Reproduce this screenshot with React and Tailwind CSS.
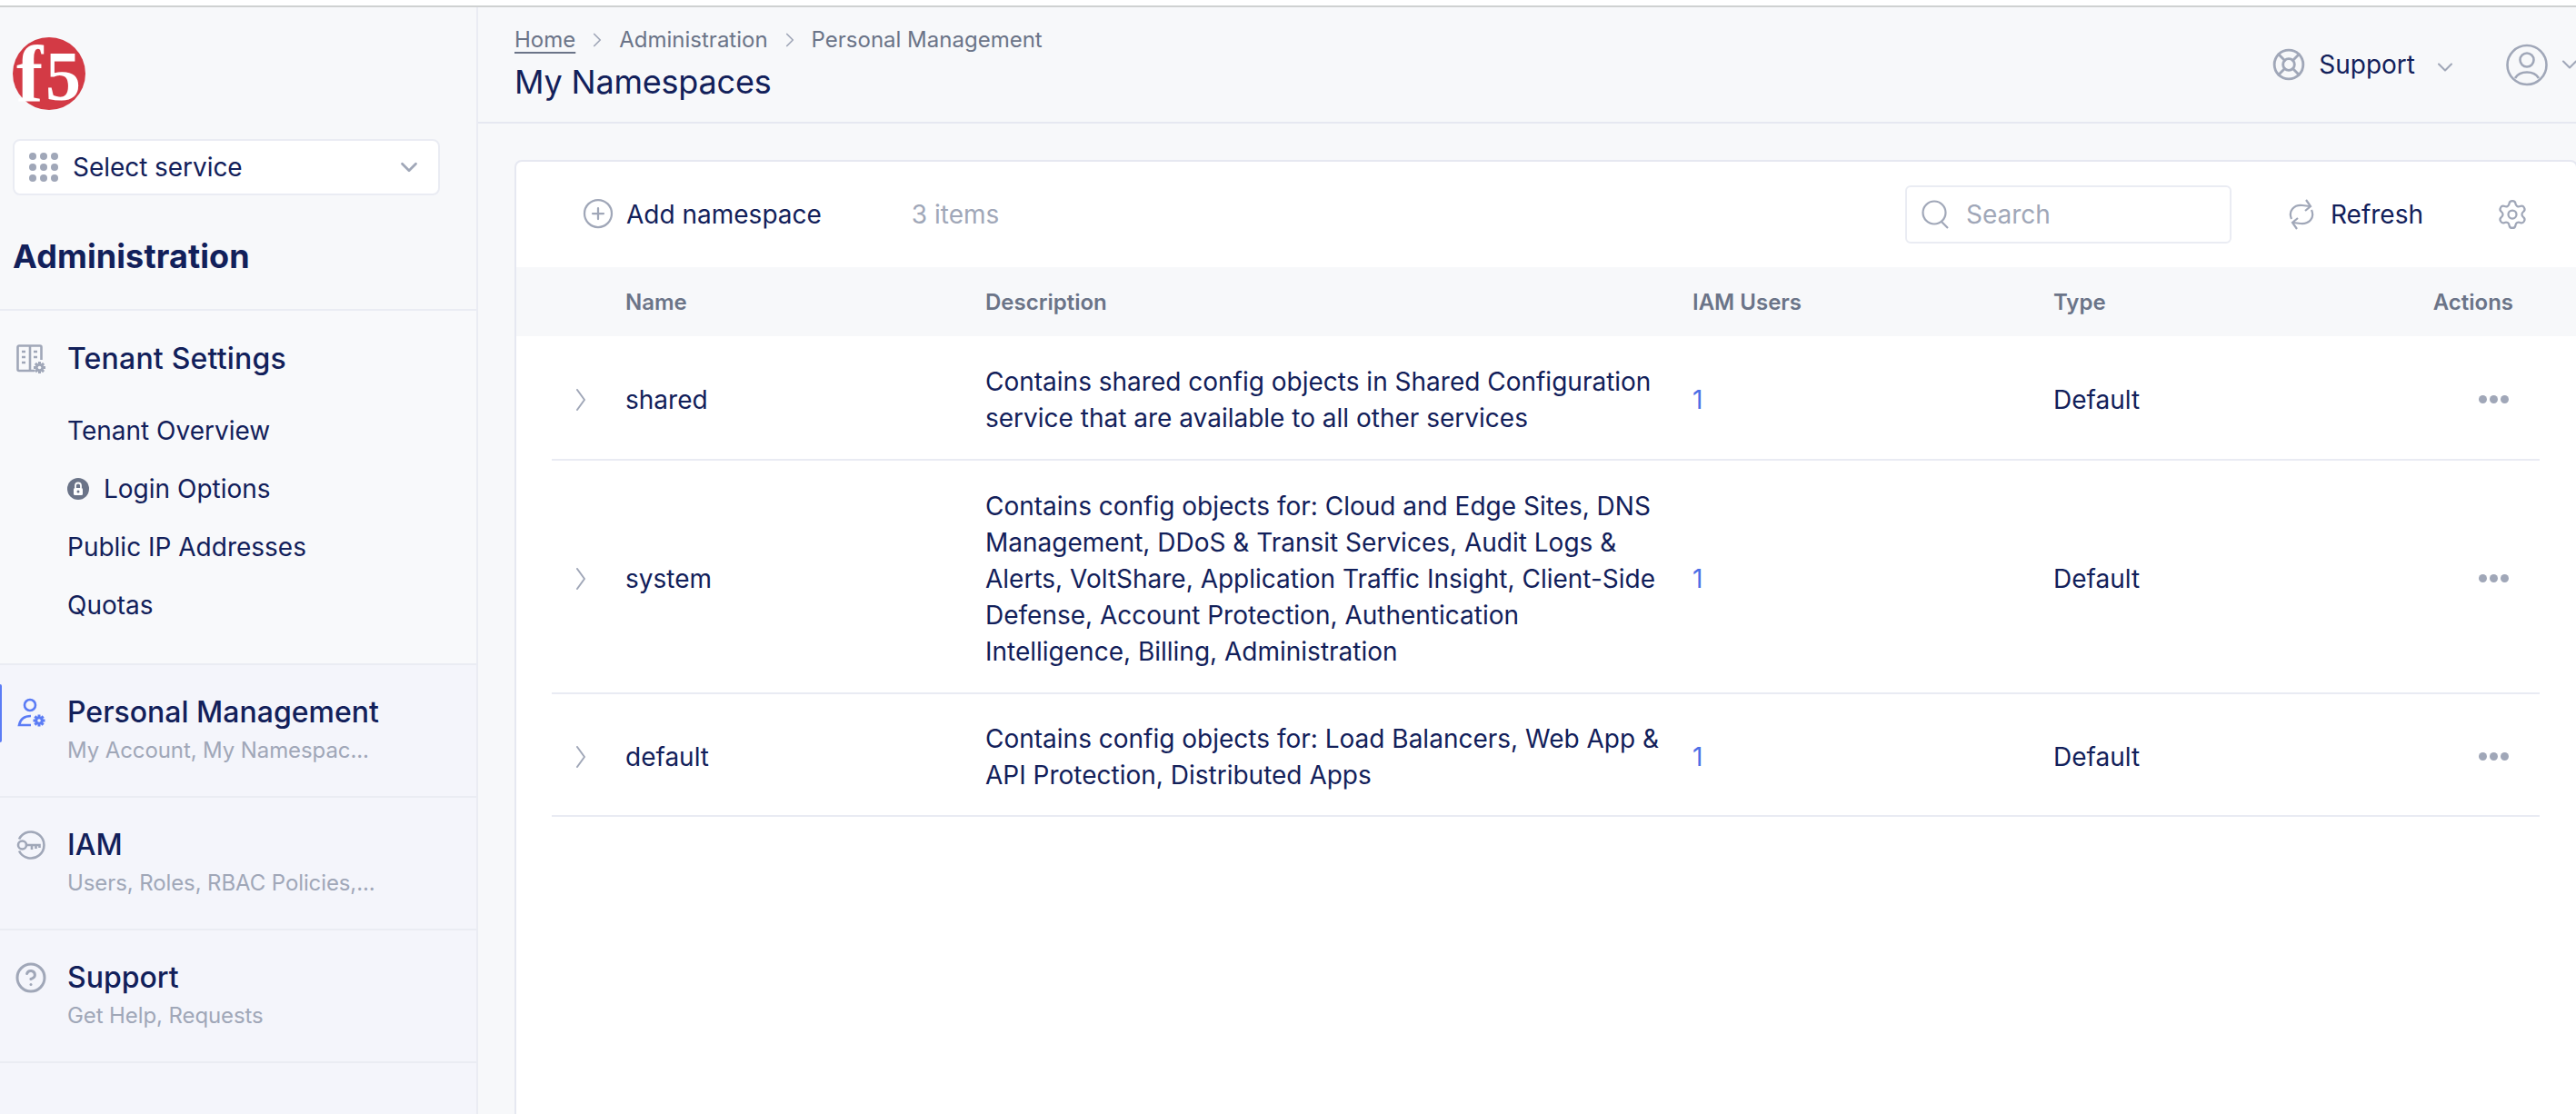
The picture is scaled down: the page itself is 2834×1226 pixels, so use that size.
import { ChevronDown, ChevronRight, CirclePlus, LifeBuoy, Settings, CircleHelp } from 'lucide-react'

const rows = [
  { name: 'shared', desc: 'Contains shared config objects in Shared Configuration service that are available to all other services', h: 'h-[137px]' },
  { name: 'system', desc: 'Contains config objects for: Cloud and Edge Sites, DNS Management, DDoS & Transit Services, Audit Logs & Alerts, VoltShare, Application Traffic Insight, Client-Side Defense, Account Protection, Authentication Intelligence, Billing, Administration', h: 'h-[257px]' },
  { name: 'default', desc: 'Contains config objects for: Load Balancers, Web App & API Protection, Distributed Apps', h: 'h-[135px]' },
]

function Logo() {
  return (
    <svg width="80" height="80" viewBox="0 0 80 80" className="overflow-visible">
      <circle cx="40" cy="40" r="40" fill="#d33a45" />
      <text x="4" y="70" fontFamily="Liberation Serif" fontWeight="700" fontSize="88" fill="#fff">f</text>
      <text x="36" y="69" fontFamily="Liberation Serif" fontWeight="700" fontSize="78" fill="#fff">5</text>
    </svg>
  )
}

function Dots() {
  return (
    <svg width="32" height="32" viewBox="0 0 32 32" fill="#a0a7b8">
      {[4, 16, 28].map(y => [4, 16, 28].map(x => <circle key={`${x}-${y}`} cx={x} cy={y} r="4" />))}
    </svg>
  )
}

// small solid cog that sits in the corner of the nav icons
function Cog({ x, y, color, bg }) {
  return (
    <g>
      {[0, 45, 90, 135].map(a => (
        <rect key={a} x={x - 1.5} y={y - 6.5} width="3" height="13" fill={color} transform={`rotate(${a} ${x} ${y})`} />
      ))}
      <circle cx={x} cy={y} r="4.6" fill={color} />
      <circle cx={x} cy={y} r="1.8" fill={bg} />
    </g>
  )
}

function TenantIcon() {
  return (
    <svg width="32" height="32" viewBox="0 0 32 32" fill="none" stroke="#a0a7b8" strokeWidth="2.6">
      <path d="M20 29H3a1.5 1.5 0 0 1-1.5-1.5V3A1.5 1.5 0 0 1 3 1.500h23A1.500 1.500 0 0 1 27.500 3v14" />
      <path d="M15 2v26" />
      <path d="M6 8h4M6 14h4M6 20h4M19 8h4M19 14h4" />
      <g stroke="none"><Cog x={25.500} y={25.500} color="#a0a7b8" bg="#f8f9fb" /></g>
    </svg>
  )
}

function UserGearIcon() {
  return (
    <svg width="32" height="32" viewBox="0 0 32 32" fill="none" stroke="#5b7cf5" strokeWidth="2.6">
      <circle cx="15" cy="8" r="6" />
      <path d="M16 20Q5 20 3 30H16" />
      <g stroke="none"><Cog x={25} y={25} color="#5b7cf5" bg="#f4f5fb" /></g>
    </svg>
  )
}

function KeyIcon() {
  return (
    <svg width="32" height="32" viewBox="0 0 32 32" fill="none" stroke="#a0a7b8" strokeWidth="2.6">
      <path d="M3 9.500a14.500 14.500 0 1 1 0 13" />
      <circle cx="6.500" cy="16" r="4.500" />
      <path d="M11 16h14.500v3M17 16v5M21.500 16v4" />
    </svg>
  )
}

function RefreshIcon() {
  return (
    <svg width="30" height="34" viewBox="0 0 30 34" fill="none" stroke="#a0a7b8" strokeWidth="2.2">
      <path d="M4 22C0 13 7 6 16 7l8 1" />
      <path d="M20 1l5 7-6 5" />
      <path d="M26 12c4 9-3 16-12 15l-8-1" />
      <path d="M10 33l-5-7 6-5" />
    </svg>
  )
}

function UserIcon() {
  return (
    <svg width="46" height="47" viewBox="0 0 46 47" fill="none" stroke="#a0a7b8" strokeWidth="2.6">
      <circle cx="23" cy="23.500" r="21.500" />
      <circle cx="23" cy="18" r="7.500" />
      <path d="M10 38c3-5 8-6.500 13-6.500s10 1.500 13 6.500" />
    </svg>
  )
}

function SearchIcon() {
  return (
    <svg width="32" height="32" viewBox="0 0 32 32" fill="none" stroke="#a0a7b8" strokeWidth="2.2" className="shrink-0">
      <circle cx="14" cy="14" r="12.500" />
      <path d="M22 24l7 7" />
    </svg>
  )
}

function RowChevron() {
  return (
    <svg width="12" height="24" viewBox="0 0 12 24" fill="none" stroke="#a0a7b8" strokeWidth="2" strokeLinecap="round" strokeLinejoin="round" className="ml-[26px]">
      <path d="M2 1l8 11-8 11" />
    </svg>
  )
}

function Group({ icon, title, sub, active }) {
  return (
    <div className="relative h-[146px] border-b-2 border-[#eaecf3] flex">
      {active && <div className="absolute left-0 top-[21px] w-[2px] h-[64px] bg-[#5b7cf5] rounded-r" />}
      <div className="w-[74px] pl-[18px] pt-[36px] shrink-0">{icon}</div>
      <div className="pt-[32px]">
        <div className="text-[32px] leading-[40px] font-medium text-[#12205a]">{title}</div>
        <div className="mt-[4px] text-[24px] leading-[36px] tracking-[-0.1px] text-[#a0a7b8]">{sub}</div>
      </div>
    </div>
  )
}

function Sidebar() {
  return (
    <aside className="w-[526px] shrink-0 border-r-2 border-[#eaecf3] bg-[#f4f5fb] flex flex-col">
      <div className="bg-[#f7f8fa] h-[334px] border-b-2 border-[#eaecf3] pl-[14px] pt-[33px]">
        <Logo />
        <div className="mt-[32px] w-[470px] h-[62px] bg-white border-2 border-[#eaecf3] rounded-[8px] flex items-center pl-[16px] pr-[17px]">
          <Dots />
          <span className="ml-[16px] text-[28px] tracking-[-0.05px] text-[#12205a] flex-1">Select service</span>
          <ChevronDown size={30} strokeWidth={2.2} className="text-[#a0a7b8]" />
        </div>
        <div className="mt-[45px] text-[36px] leading-[44px] font-bold tracking-[0.1px] text-[#12205a]">Administration</div>
      </div>
      <div className="bg-[#f8f9fb] h-[390px] border-b-2 border-[#eaecf3]">
        <div className="flex items-center pt-[33px]">
          <div className="w-[74px] pl-[18px] shrink-0"><TenantIcon /></div>
          <div className="text-[32px] leading-[40px] font-medium tracking-[0.2px] text-[#12205a]">Tenant Settings</div>
        </div>
        <div className="pl-[74px] pt-[27px] text-[28px] leading-[64px] text-[#12205a]">
          <div>Tenant Overview</div>
          <div className="flex items-center">
            <span className="w-[24px] h-[24px] rounded-full bg-[#6b7488] flex items-center justify-center mr-[16px]">
              <svg width="14" height="16" viewBox="0 0 14 16" fill="none">
                <path d="M4 7V4.500a3 3 0 0 1 6 0V7" stroke="#fff" strokeWidth="1.800" />
                <rect x="2" y="7" width="10" height="8" rx="1.500" fill="#fff" />
                <circle cx="7" cy="11" r="1.500" fill="#6b7488" />
              </svg>
            </span>
            Login Options
          </div>
          <div>Public IP Addresses</div>
          <div>Quotas</div>
        </div>
      </div>
      <Group active icon={<UserGearIcon />} title="Personal Management" sub="My Account, My Namespac..." />
      <Group icon={<KeyIcon />} title="IAM" sub="Users, Roles, RBAC Policies,..." />
      <Group icon={<CircleHelp size={36} strokeWidth={2} className="text-[#a0a7b8] -ml-[2px] -mt-[2px]" />} title="Support" sub="Get Help, Requests" />
    </aside>
  )
}

function Header() {
  return (
    <header className="h-[128px] border-b-2 border-[#e6e8f1] flex pl-[40px]">
      <div className="pt-[20px]">
        <div className="flex items-center text-[24px] leading-[32px] text-[#6b7488]">
          <span className="underline underline-offset-[5px]">Home</span>
          <ChevronRight size={26} strokeWidth={1.6} className="mx-[11px] text-[#a0a7b8]" />
          <span>Administration</span>
          <ChevronRight size={26} strokeWidth={1.6} className="mx-[11px] text-[#a0a7b8]" />
          <span>Personal Management</span>
        </div>
        <div className="mt-[8px] text-[36px] leading-[44px] tracking-[-0.2px] text-[#12205a]">My Namespaces</div>
      </div>
      <div className="ml-auto -mr-[7px] shrink-0 self-start mt-[39px] h-[48px] flex items-center">
        <LifeBuoy size={38} strokeWidth={1.8} className="text-[#a0a7b8]" />
        <span className="ml-[14px] text-[28px] leading-[36px] text-[#12205a]">Support</span>
        <ChevronDown size={28} strokeWidth={1.8} className="ml-[19px] mt-[6px] text-[#a0a7b8]" />
        <div className="ml-[53px]"><UserIcon /></div>
        <ChevronDown size={28} strokeWidth={1.8} className="ml-[10px] text-[#a0a7b8]" />
      </div>
    </header>
  )
}

function Toolbar() {
  return (
    <div className="h-[116px] flex items-center pl-[72px] pr-[52px]">
      <CirclePlus size={36} strokeWidth={1.5} className="text-[#a0a7b8] -mt-[3px]" />
      <span className="ml-[13px] text-[28px] text-[#12205a]">Add namespace</span>
      <span className="ml-[99px] text-[28px] text-[#a0a7b8]">3 items</span>
      <div className="ml-auto w-[359px] h-[64px] border-2 border-[#eaecf3] rounded-[6px] flex items-center pl-[16px]">
        <SearchIcon />
        <span className="ml-[17px] text-[28px] text-[#a0a7b8]">Search</span>
      </div>
      <div className="ml-[62px]"><RefreshIcon /></div>
      <span className="ml-[17px] text-[28px] text-[#12205a]">Refresh</span>
      <Settings size={36} strokeWidth={1.5} className="ml-[80px] text-[#a0a7b8]" />
    </div>
  )
}

function Table() {
  return (
    <div>
      <div className="h-[76px] pt-[1px] bg-[#f7f8fa] pl-[39px] pr-[69px] grid grid-cols-[81px_396px_778px_397px_1fr_auto] items-center text-[24px] font-semibold text-[#6b7488]">
        <div />
        <div>Name</div>
        <div>Description</div>
        <div>IAM Users</div>
        <div>Type</div>
        <div>Actions</div>
      </div>
      <div className="pl-[39px] pr-[40px]">
        {rows.map(r => (
          <div key={r.name} className={`${r.h} pt-[4px] border-b-2 border-[#e9ebf3] grid grid-cols-[81px_396px_778px_397px_1fr_auto] items-center text-[28px] leading-[40px] text-[#12205a]`}>
            <RowChevron />
            <div>{r.name}</div>
            <div className="w-[745px]">{r.desc}</div>
            <div className="text-[#4c6fe6]">1</div>
            <div>Default</div>
            <div className="flex pr-[34px] gap-[3px]">
              <span className="w-[9px] h-[9px] rounded-full bg-[#a0a7b8]" />
              <span className="w-[9px] h-[9px] rounded-full bg-[#a0a7b8]" />
              <span className="w-[9px] h-[9px] rounded-full bg-[#a0a7b8]" />
            </div>
          </div>
        ))}
      </div>
    </div>
  )
}

export default function App() {
  return (
    <div className="w-[2834px] h-[1226px] overflow-hidden bg-white flex flex-col" style={{ fontFamily: 'Inter, sans-serif' }}>
      <div className="h-[8px] shrink-0 bg-white border-b-2 border-[#cfd1d1]" />
      <div className="flex flex-1 min-h-0 bg-[#f7f8fa]">
        <Sidebar />
        <main className="flex-1 min-w-0 flex flex-col">
          <Header />
          <div className="flex-1 pl-[40px] pt-[40px]">
            <div className="h-full -mr-[2px] bg-white border-2 border-b-0 border-[#e6e8f1] rounded-t-[8px] overflow-hidden">
              <Toolbar />
              <Table />
            </div>
          </div>
        </main>
      </div>
    </div>
  )
}
